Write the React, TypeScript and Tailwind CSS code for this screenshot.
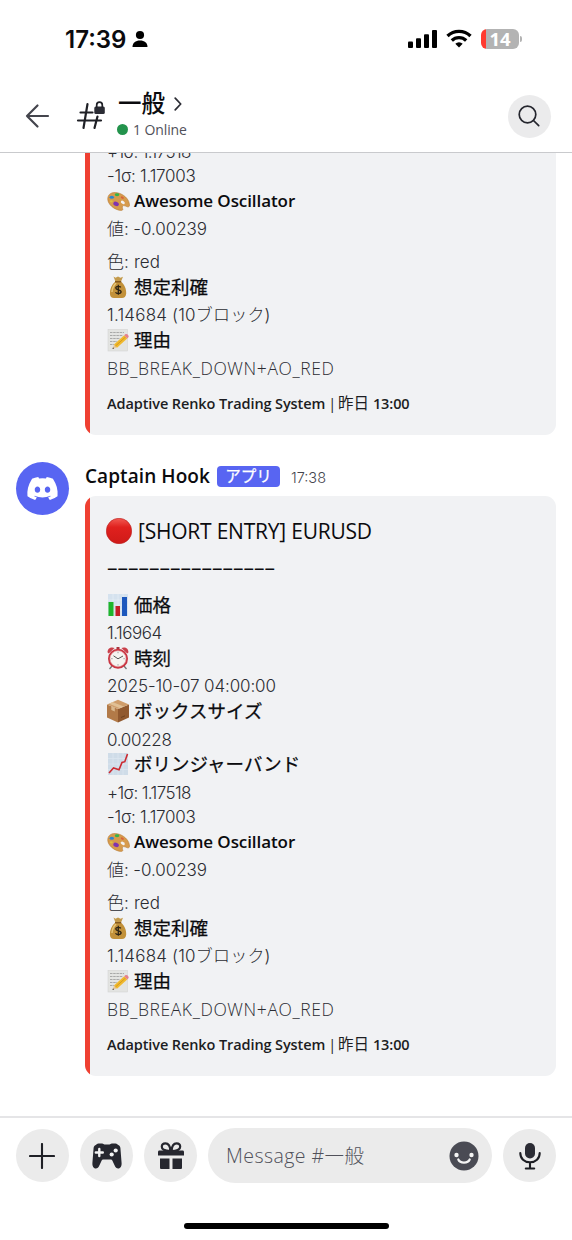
import React from 'react'
import { FaDiscord } from 'react-icons/fa'

type Row = {
  text: string
  className: string
}

type FieldProps = {
  icon: React.ReactNode
  name: string
  rows: Row[]
}

const latin = "font-['Open_Sans','Noto_Sans_CJK_JP',sans-serif]"
const digits = "text-[17px] font-['Inter','Noto_Sans_CJK_JP',sans-serif] font-light"

function ChartBars() {
  return (
    <svg viewBox="0 0 22 24" className="h-6 w-[22px]">
      <rect x="1" y="1" width="20" height="22" fill="#d5e2ee" />
      <path d="M1 7h20M1 12h20M1 17h20M6 1v22M11 1v22M16 1v22" stroke="#e6eef5" strokeWidth=".7" />
      <rect x="1.5" y="9" width="5" height="14" fill="#1fb52b" />
      <rect x="8.5" y="13" width="4.5" height="10" fill="#c51f28" />
      <rect x="15" y="4" width="5" height="19" fill="#1d58bd" />
    </svg>
  )
}

function AlarmClock() {
  return (
    <svg viewBox="0 0 22 24" className="h-6 w-[22px]">
      <path d="M5 20l-2.5 3M17 20l2.5 3" stroke="#777" strokeWidth="1.3" />
      <path d="M.6 6.4C.3 2.5 4 .4 7.6 2L1.8 7.4zM21.4 6.4C21.7 2.5 18 .4 14.4 2l5.8 5.4z" fill="#c9404a" />
      <path d="M9.5 1h3v2h-3z" fill="#a8343e" />
      <circle cx="11" cy="12.7" r="10" fill="#c93440" />
      <circle cx="11" cy="12.7" r="8" fill="#f5f4f0" stroke="#e29a9e" strokeWidth=".6" />
      <path d="M6.5 9.8l4.5 3 5-2.8" stroke="#444" strokeWidth=".9" fill="none" />
      <path d="M11 5.8v1.4M11 18.2v1.4M4.2 12.7h1.4M16.4 12.7h1.4" stroke="#777" strokeWidth=".7" />
    </svg>
  )
}

function Package() {
  return (
    <svg viewBox="0 0 22 24" className="h-6 w-[22px]">
      <path d="M0 5.5L11 10v13.5L0 18.5z" fill="#b27a48" />
      <path d="M22 5.5L11 10v13.5l11-5z" fill="#91592f" />
      <path d="M0 5.5L11 .8l11 4.7L11 10z" fill="#cf9d6b" />
      <path d="M5.500 3.100l11.300 4.500L13 9.200 2.100 4.700zM4.300 7.300l3.500 1.500v3.700l-3.500-1.500z" fill="#e3c9a0" opacity=".8" />
      <path d="M14 18.5l4-1.7" stroke="#6a3e1d" strokeWidth=".9" />
    </svg>
  )
}

function ChartUp() {
  return (
    <svg viewBox="0 0 22 24" className="h-6 w-[22px]">
      <rect x="1" y="1" width="20" height="22" fill="#cfdce8" />
      <path d="M1 6.5h20M1 12h20M1 17.5h20M6 1v22M11 1v22M16 1v22" stroke="#dde7f0" strokeWidth=".7" />
      <path d="M2 21l4.5-5 5.5 1.7 3-7.2 2.8-.8L20.5 2" stroke="#cc2a31" strokeWidth="1.6" fill="none" />
    </svg>
  )
}

function Palette() {
  return (
    <svg viewBox="0 0 24 24" className="h-6 w-[23px]">
      <path d="M1 8C2 3.4 7.5 2 13 4c6.5 2.4 10.5 7.5 10.5 12.5 0 1.5-1.5 2-3 1.3-2-1-4.5-1.8-4.5.4 0 2 1.5 3.3-1 3.6C8.5 22-.9 15 1 8z" fill="#d79b4c" stroke="#b67a34" strokeWidth=".6" />
      <ellipse cx="16.5" cy="13.5" rx="2.3" ry="1.5" transform="rotate(35 16.5 13.5)" fill="#f1f2f4" />
      <ellipse cx="5" cy="8" rx="2.3" ry="1.6" fill="#2d86cf" />
      <ellipse cx="10.5" cy="5.5" rx="2.4" ry="1.5" fill="#35b348" />
      <ellipse cx="9.5" cy="15" rx="3" ry="2.2" transform="rotate(25 9.5 15)" fill="#8033b0" />
      <ellipse cx="4.5" cy="12.3" rx="1.5" ry="1.2" fill="#e0c23d" />
      <ellipse cx="16" cy="8.5" rx="1.7" ry="1.1" transform="rotate(30 16 8.5)" fill="#d9623a" />
    </svg>
  )
}

function MoneyBag() {
  return (
    <svg viewBox="0 0 22 24" className="h-6 w-[22px]">
      <path d="M6.5 1.5l2 1.2L11 1.5l2.5 1.2 2.5-1L13.8 7H8.6z" fill="#c39a4b" />
      <path d="M8.3 6.5h5.600c3.600 3 5.600 7.500 5.300 12-.2 3.200-2 4.500-4.200 4.500H7c-2.500 0-4-1.500-4.100-4.500C2.700 14 4.700 9.500 8.300 6.500z" fill="#c2913a" />
      <path d="M5 17c.2-4 1.600-6.500 4-9" stroke="#e5c578" strokeWidth="1.5" fill="none" />
      <path d="M8 6.700h6.200" stroke="#84591f" strokeWidth="1.4" />
      <path d="M13.800 12.300c-.8-1.200-5-1.500-5 .7 0 2.300 5.300 1.200 5.300 3.800 0 2.300-4.700 2.200-5.600.5M11.300 9.800v10" stroke="#2d2415" strokeWidth="1.3" fill="none" />
    </svg>
  )
}

function Memo() {
  return (
    <svg viewBox="0 0 22 24" className="h-6 w-[22px]">
      <rect x="1" y="1.5" width="19.5" height="21.5" fill="#e3e4e2" stroke="#cfd0ce" strokeWidth=".5" />
      <path d="M3 4.5h14M3 7.5h13M3 10.5h10M3 13.5h7M3 16.5h4" stroke="#999" strokeWidth=".8" strokeDasharray="2.5 .7" />
      <path d="M5.5 21l1.5-4.5 3 2.8z" fill="#e6c79c" />
      <path d="M7 16.5L17.2 7.3l3 3.2L10 19.7z" fill="#f0b92d" />
      <path d="M8.5 18L18.6 8.900" stroke="#c98b17" strokeWidth=".7" />
      <path d="M17.2 7.300l1.400-1.200c1.500-.8 3.600 1.400 3 3l-1.400 1.400z" fill="#e5818c" />
      <path d="M5.500 21l.5-1.700 1.100 1.100z" fill="#333" />
    </svg>
  )
}

function RedCircle() {
  return (
    <svg viewBox="0 0 26 26" className="size-[26px]">
      <defs>
        <linearGradient id="ball" x1="0" y1="0" x2="0" y2="1">
          <stop offset="0" stopColor="#f25a52" />
          <stop offset=".35" stopColor="#e0211e" />
          <stop offset="1" stopColor="#cf1a18" />
        </linearGradient>
      </defs>
      <circle cx="13" cy="13" r="12.7" fill="url(#ball)" stroke="#b81e1c" strokeWidth=".6" />
    </svg>
  )
}

function Rows({ rows }: { rows: Row[] }) {
  return (
    <>
      {rows.map((r: Row) => (
        <div key={r.text} className={`leading-6 text-[#2b2c32] ${r.className}`}>{r.text}</div>
      ))}
    </>
  )
}

function Field({ icon, name, rows }: FieldProps) {
  return (
    <>
      <div className="flex h-[26px] items-center gap-[5px]">
        {icon}
        {name === 'Awesome Oscillator'
          ? <span className="-ml-px text-[17px] font-semibold tracking-[-0.08px]">{name}</span>
          : <span className="text-[18.5px] [-webkit-text-stroke:0.25px]">{name}</span>}
      </div>
      <Rows rows={rows} />
    </>
  )
}

const bands: Row[] = [
  { text: '+1σ: 1.17518', className: `h-[27px] pt-[4px] tracking-[-0.6px] ${digits}` },
  { text: '-1σ: 1.17003', className: `h-[25px] pt-px tracking-[-0.25px] ${digits}` },
]

function Entry() {
  return (
    <>
      <div className="-ml-px flex h-10 items-center gap-[6px]">
        <RedCircle />
        <span className="pt-px text-[21px] tracking-[-0.22px]">[SHORT ENTRY] EURUSD</span>
      </div>
      <div className="mb-[7px] h-[34px] text-[21px] leading-[32px]">––––––––––––––––</div>
      <Field icon={<ChartBars />} name="価格" rows={[
        { text: '1.16964', className: `h-[27px] pt-[3px] tracking-[-0.5px] ${digits}` },
      ]} />
      <Field icon={<AlarmClock />} name="時刻" rows={[
        { text: '2025-10-07 04:00:00', className: `h-[27px] pt-[3px] tracking-[-0.13px] ${digits}` },
      ]} />
      <Field icon={<Package />} name="ボックスサイズ" rows={[
        { text: '0.00228', className: `h-[27px] pt-[4px] tracking-[-0.3px] ${digits}` },
      ]} />
      <Field icon={<ChartUp />} name="ボリンジャーバンド" rows={bands} />
    </>
  )
}

// scrolled: only the lower part of the embed is left under the header
function Embed({ scrolled }: { scrolled?: boolean }) {
  return (
    <div className={`flex w-[471px] overflow-hidden bg-[#f1f2f4] ${scrolled ? 'rounded-b-[11px]' : 'rounded-[11px]'}`}>
      <div className="w-[5px] bg-[#ef4032]" />
      <div className={`flex flex-col whitespace-nowrap pl-[17px] ${scrolled ? '' : 'pt-[15px]'}`}>
        {scrolled ? <Rows rows={bands} /> : <Entry />}
        <Field icon={<Palette />} name="Awesome Oscillator" rows={[
          { text: '値: -0.00239', className: `h-[27px] pt-[3px] tracking-[-0.07px] ${digits}` },
          { text: '色: red', className: `h-[33px] pt-[9px] tracking-[0.1px] ${digits}` },
        ]} />
        <Field icon={<MoneyBag />} name="想定利確" rows={[
          { text: '1.14684 (10ブロック)', className: `h-[27px] pt-[3px] tracking-[0.2px] ${digits}` },
        ]} />
        <Field icon={<Memo />} name="理由" rows={[
          { text: 'BB_BREAK_DOWN+AO_RED', className: 'h-[27px] pt-[3px] text-[17.5px] font-light tracking-[0.6px]' },
        ]} />
        <div className="mb-5 mt-[11px] flex h-6 items-baseline text-[14.5px] font-semibold leading-6 tracking-[-0.1px] text-[#1c1d22]">
          <span>Adaptive Renko Trading System</span>
          <span className="ml-[3px] font-normal">|</span>
          <span className="ml-[2px] text-[15.5px] font-normal">昨日</span>
          <span className="ml-[4px]">13:00</span>
        </div>
      </div>
    </div>
  )
}

function Message() {
  return (
    <div className="flex gap-4">
      <div className="mt-px flex size-[53px] shrink-0 items-center justify-center rounded-full bg-[#5865f2]">
        <FaDiscord className="size-[33px] text-white" />
      </div>
      <div>
        <div className="flex h-[35px] items-center pb-1">
          <span className="text-[19px] font-semibold tracking-[0.07px]">Captain Hook</span>
          <span className="ml-[7px] flex h-[21px] w-[63px] items-center justify-center rounded bg-[#5865f2] text-[15.5px] text-white [-webkit-text-stroke:0.25px]">アプリ</span>
          <span className="ml-[11px] pt-[2px] font-['Inter'] text-[14.5px] font-light text-[#45464e]">17:38</span>
        </div>
        <Embed />
      </div>
    </div>
  )
}

function StatusBar() {
  return (
    <div className="flex h-[78px] shrink-0 items-center pl-[65px] pr-[50px]">
      <span className="pt-px font-['Inter'] text-[24px] font-semibold leading-none">17:39</span>
      <svg viewBox="0 0 16 18" className="ml-[6px] h-[18px] w-4">
        <circle cx="8" cy="5" r="4.1" />
        <path d="M.5 17C.5 12.8 3.5 10.500 8 10.500s7.500 2.300 7.500 6.500z" />
      </svg>
      <svg viewBox="0 0 30 20" className="ml-auto h-5 w-[30px]">
        <rect x="0" y="12.5" width="5" height="6.5" rx="1" />
        <rect x="8" y="9.3" width="5" height="9.7" rx="1" />
        <rect x="16" y="5.3" width="5" height="13.7" rx="1" />
        <rect x="24" y="1" width="5" height="18" rx="1" />
      </svg>
      <svg viewBox="0 0 26 20" className="ml-[8px] h-5 w-[26px]" fill="none" stroke="black" strokeWidth="3.3">
        <path d="M1.5 7a16.5 16.5 0 0 1 23 0" />
        <path d="M5.800 11.500a10.300 10.300 0 0 1 14.400 0" />
        <path d="M13 18.500l-3.700-3.700a5.300 5.300 0 0 1 7.400 0z" fill="black" stroke="none" />
      </svg>
      <div className="ml-[9px] flex h-5 w-[38px] items-center justify-center rounded-[6px] bg-linear-to-r from-[#ff3b30] from-[14%] to-[#b3b3b3] to-[14%] font-['Open_Sans'] text-[18.5px] font-bold leading-none text-white">14</div>
      <div className="ml-px h-[6px] w-[2px] rounded-r-full bg-[#b3b3b3]" />
    </div>
  )
}

function Header() {
  return (
    <div className="flex h-[75px] shrink-0 items-center border-b border-[#c9cacd] pl-[25px] pr-[21px] pt-[2px]">
      <svg viewBox="0 0 26 26" className="h-[26px] w-[26px]" fill="none" stroke="#44454d" strokeWidth="2.2" strokeLinecap="round" strokeLinejoin="round">
        <path d="M23 13H2M12.500 2.500L2 13l10.500 10.500" />
      </svg>
      <svg viewBox="0 0 30 30" className="ml-[25px] h-[30px] w-[30px]" fill="none" stroke="#1f2026" strokeWidth="2.2" strokeLinecap="round">
        <path d="M4.500 11.500h12M2 19.500h23M11.500 3L7.500 27M21.500 15.500L18.500 27" />
        <rect x="18.3" y="5.5" width="10.5" height="7.5" rx="1.5" fill="#2b2c34" stroke="none" />
        <path d="M20.700 6V4a2.800 2.800 0 0 1 5.600 0V6" strokeWidth="1.7" />
      </svg>
      <div className="ml-3 mt-[-1px] flex flex-col">
        <div className="flex h-[27px] items-center">
          <span className="text-[23.5px] font-medium leading-none">一般</span>
          <svg viewBox="0 0 8 14" className="ml-[9px] h-[14px] w-2" fill="none" stroke="#2b2c34" strokeWidth="1.7" strokeLinecap="round" strokeLinejoin="round">
            <path d="M1.200 1.200L6.700 7l-5.500 5.800" />
          </svg>
        </div>
        <div className="flex h-6 items-center">
          <div className="-ml-px size-[11px] rounded-full bg-[#23934c]" />
          <span className="ml-[5px] text-[14px] tracking-[-0.1px] text-[#50515a]">1 Online</span>
        </div>
      </div>
      <div className="ml-auto flex size-[43px] items-center justify-center rounded-full bg-[#ebebec]">
        <svg viewBox="0 0 22 22" className="mr-px size-[22px]" fill="none" stroke="#25262e" strokeWidth="1.7" strokeLinecap="round">
          <circle cx="9.5" cy="9.5" r="8.3" />
          <path d="M15.500 15.500l5.200 5.200" />
        </svg>
      </div>
    </div>
  )
}

function Composer() {
  const button = 'flex size-[53px] shrink-0 items-center justify-center rounded-full bg-[#ebebeb]'
  return (
    <div className="flex h-[124px] shrink-0 flex-col items-center border-t-2 border-[#e5e5e7] px-4 pt-[10px]">
      <div className="flex w-full items-center gap-[11px]">
        <button className={button}>
          <svg viewBox="0 0 26 26" className="mr-px size-[26px]" stroke="#1f2026" strokeWidth="2.1" strokeLinecap="round">
            <path d="M13 1v24M1 13h24" />
          </svg>
        </button>
        <button className={button}>
          <svg viewBox="0 0 30 26" className="h-[26px] w-[30px]" fill="#26272f">
            <path d="M6.500.5h3.700c1.200 0 1.300 1 2.300 1h5c1 0 1.100-1 2.300-1h3.700c1.500 0 1.700 1 2.700 1.400 1.500.6 2 1.600 2.200 3.200L29.600 20c.2 3-1.100 5.500-3.400 5.500-1.700 0-2.600-1-3.300-2.500l-2.600-5.500c-.4-.8-.9-1-1.700-1h-7.200c-.8 0-1.300.2-1.700 1L7.100 23c-.7 1.500-1.600 2.500-3.300 2.500C1.500 25.500.2 23 .4 20L1.600 5.100c.2-1.600.7-2.600 2.200-3.200C4.800 1.500 5 .5 6.500.5z" />
            <path d="M7.300 6v7M3.800 9.500h7" stroke="#f4f4f4" strokeWidth="2.4" strokeLinecap="round" />
            <circle cx="23.7" cy="7.5" r="2.1" fill="#f4f4f4" />
            <circle cx="19.7" cy="11.5" r="2.1" fill="#f4f4f4" />
          </svg>
        </button>
        <button className={button}>
          <svg viewBox="0 0 26 27" className="h-[27px] w-[26px]" fill="#26272f">
            <g fill="none" stroke="#26272f" strokeWidth="2.2">
              <path d="M12.500 9C6 9 3.800 7.300 3.800 4.800 3.800 2.700 5.300 1.300 7.500 1.300c3 0 4.700 3 5 7.700z" />
              <path d="M13.500 9c6.500 0 8.700-1.700 8.700-4.200 0-2.100-1.500-3.500-3.700-3.500-3 0-4.700 3-5 7.700z" />
            </g>
            <path d="M1.500 8.500h23c1 0 1.500.6 1.500 1.500v3.500H0V10c0-.9.500-1.500 1.500-1.500zM2 16.500h9.500V27H3.500c-1 0-1.500-.5-1.500-1.500zM14.500 16.500H24v9c0 1-.5 1.500-1.500 1.500h-8z" />
          </svg>
        </button>
        <div className="flex h-[55px] w-[284px] items-center justify-between rounded-full bg-[#ebebeb] pl-[18px] pr-[13px]">
          <span className="whitespace-nowrap pt-px text-[19.5px] font-light tracking-[0.45px] text-[#50515a]">Message #一般</span>
          <svg viewBox="0 0 30 30" className="size-[30px]">
            <circle cx="15" cy="15" r="14.5" fill="#4a4b54" />
            <circle cx="7.5" cy="14" r="2.2" fill="#f4f4f4" />
            <circle cx="22.5" cy="14" r="2.2" fill="#f4f4f4" />
            <path d="M9.300 18.500c1.800 4.200 9.600 4.200 11.400 0" stroke="#f4f4f4" strokeWidth="2.2" strokeLinecap="round" fill="none" />
          </svg>
        </div>
        <button className={button}>
          <svg viewBox="0 0 22 28" className="h-7 w-[22px]" fill="none" stroke="#1d1e24" strokeWidth="2.1" strokeLinecap="round">
            <rect x="6" y="1" width="10" height="15.5" rx="5" fill="#2b2c34" stroke="none" />
            <path d="M1.300 11c0 5.500 4 9.300 9.700 9.300s9.700-3.800 9.700-9.300M11 20.300V26M6.800 26.500h8.400" />
          </svg>
        </button>
      </div>
      <div className="mt-10 h-[6px] w-[205px] rounded-full bg-black" />
    </div>
  )
}

export default function App() {
  return (
    <div className={`flex h-[1240px] w-[572px] flex-col overflow-hidden bg-white text-[#0b0b0e] ${latin}`}>
      <StatusBar />
      <Header />
      <div className="flex min-h-0 flex-1 flex-col justify-end gap-[26px] overflow-hidden pb-10 pl-4">
        <div className="pl-[69px]">
          <Embed scrolled />
        </div>
        <Message />
      </div>
      <Composer />
    </div>
  )
}
